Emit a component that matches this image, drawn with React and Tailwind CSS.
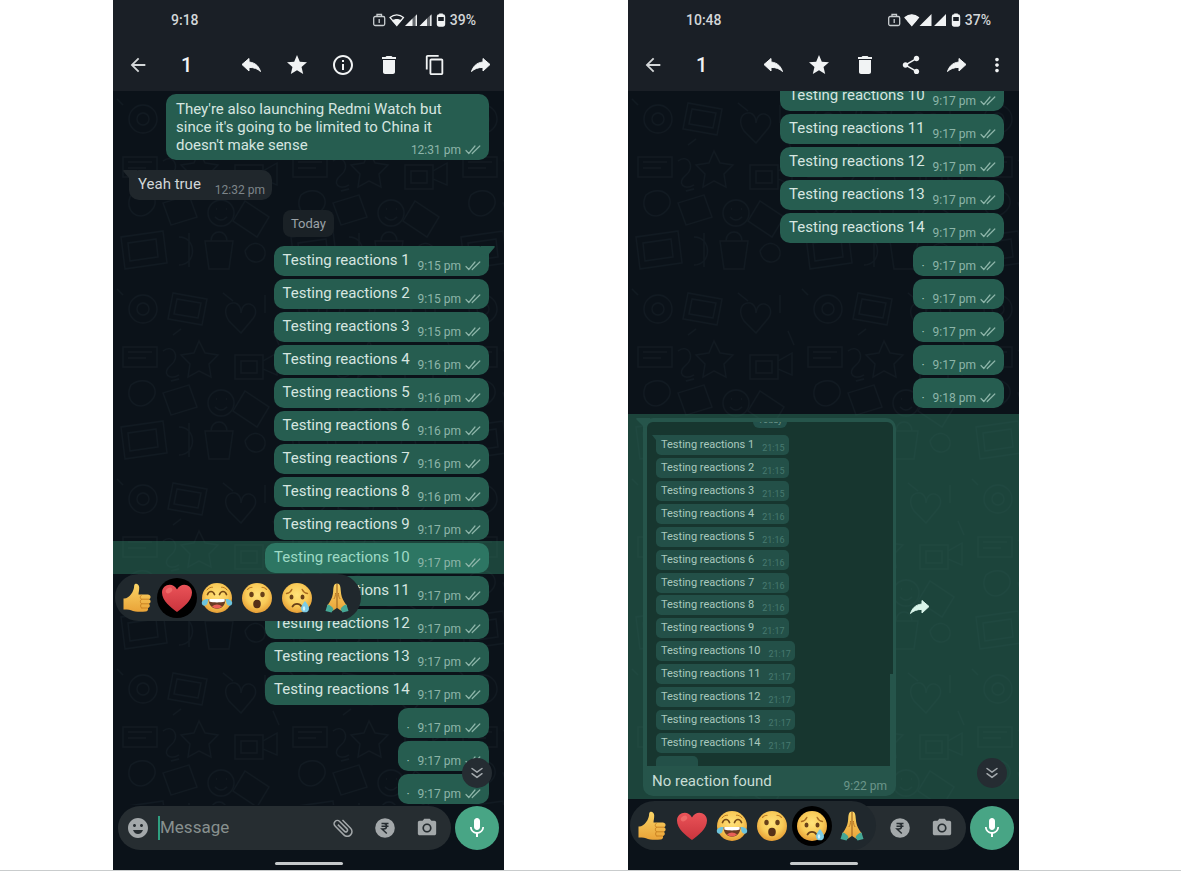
import React from "react";
import {
  MdArrowBack,
  MdStar,
  MdInfoOutline,
  MdDelete,
  MdContentCopy,
  MdShare,
  MdMoreVert,
  MdMic,
  MdCameraAlt,
  MdAttachFile,
  MdEmojiEmotions,
} from "react-icons/md";

/* ---------- icons ---------- */

function ArrowIcon({ back = false, className = "size-6" }) {
  return (
    <svg viewBox="0 0 24 24" className={className} fill="currentColor" stroke="currentColor" strokeWidth="1" strokeLinejoin="round" aria-hidden="true">
      {back ? (
        <path d="M10 9V5.5L3 11.500l7 6.500v-3.600c5 0 8.500 1.200 11.500 4.100-1.500-4.500-4.500-8.800-11.500-9.500z" />
      ) : (
        <path d="M14 9V5.5l7 6-7 6.500v-3.600c-5 0-8.500 1.200-11.500 4.100C4 14 7 9.700 14 9z" />
      )}
    </svg>
  );
}

function Ticks() {
  return (
    <svg viewBox="0 0 16 10" className="h-[10px] w-4" fill="none" stroke="currentColor" strokeWidth="1.2" strokeLinecap="round" strokeLinejoin="round" aria-hidden="true">
      <path d="M1 5.500l2.800 3L10 1M7.200 8.500L14.800 1" />
    </svg>
  );
}

function RupeeIcon() {
  return (
    <svg viewBox="0 0 24 24" className="size-6" aria-hidden="true">
      <circle cx="12" cy="12" r="9.800" fill="currentColor" />
      <path d="M8.500 7.500h7M8.500 10.300h7M8.500 7.500h2.300c3.600 0 3.600 5.500 0 5.500H9l4.800 4.500" fill="none" stroke="#262d31" strokeWidth="1.500" />
    </svg>
  );
}

function ChevronsIcon() {
  return (
    <svg viewBox="0 0 14 14" className="size-[14px]" fill="none" stroke="currentColor" strokeWidth="1.500" strokeLinecap="round" strokeLinejoin="round" aria-hidden="true">
      <path d="M2 2.500l5 3.700 5-3.700M2 7.700l5 3.700 5-3.700" />
    </svg>
  );
}

function StatusIcons({ dual }) {
  return (
    <svg viewBox="0 0 76 16" className="h-4 w-[76px]" aria-hidden="true">
      <g fill="none" stroke="#c9cdd0" strokeWidth="1.300">
        <rect x="1.700" y="4.500" width="11" height="9" rx="1.500" />
        <path d="M5 4.300V2.500h4.500v1.800M7.200 7v4" />
      </g>
      <path d="M18 5.500c4-3.600 9.500-3.600 13.500 0l-6.700 8z" fill={dual ? "none" : "#f0f2f3"} stroke="#f0f2f3" strokeWidth="1.200" />
      <path d="M19.800 8.500c3-2 7-2 10 0l-5 5z" fill="#f0f2f3" />
      {dual ? (
        <g fill="#f0f2f3">
          <path d="M33 14L45 2v12z" opacity=".35" />
          <path d="M33 14l7.500-7.500V14zM43.600 4l1.400-1.500V14h-1.400z" />
          <path d="M47.500 14l12-12v12z" opacity=".35" />
          <path d="M47.500 14l7.500-7.500V14zM58.100 4l1.400-1.500V14h-1.400z" />
        </g>
      ) : (
        <path d="M32.500 14l12-12v12zM47 14L59 2v12z" fill="#f0f2f3" />
      )}
      <path d="M67.200 3V1.500h3.600V3" fill="#f0f2f3" />
      <rect x="65.500" y="3" width="7" height="11" rx="1.400" fill="none" stroke="#f0f2f3" strokeWidth="1.400" />
      <path d="M66 9h6v5h-6zM66 3h6v2h-6z" fill="#f0f2f3" />
    </svg>
  );
}

/* ---------- emoji drawings ---------- */

function EmojiDefs() {
  return (
    <svg className="absolute size-0" aria-hidden="true">
      <defs>
        <radialGradient id="face" cx=".5" cy=".4" r=".6">
          <stop offset="0" stopColor="#ffe27a" />
          <stop offset=".6" stopColor="#f9cb58" />
          <stop offset="1" stopColor="#e59d35" />
        </radialGradient>
        <linearGradient id="skin" x1="0" y1="0" x2="0" y2="1">
          <stop offset="0" stopColor="#fbd566" />
          <stop offset="1" stopColor="#e9a338" />
        </linearGradient>
        <linearGradient id="heart" x1="0" y1="0" x2="0" y2="1">
          <stop offset="0" stopColor="#ea5358" />
          <stop offset="1" stopColor="#c9343d" />
        </linearGradient>
        <pattern id="doodle" width="170" height="190" patternUnits="userSpaceOnUse">
          <g fill="none" stroke="#1a242c" strokeWidth="1.300" opacity=".42">
            <circle cx="30" cy="28" r="14" />
            <circle cx="30" cy="28" r="6" />
            <path d="M60 12l34 6-5 26-34-6zM64 18l24 4-3 15-24-4z" />
            <path d="M116 40c-12-18 12-26 12-8 2-18 24-6 10 8l-10 12z" />
            <path d="M10 66h34v20H10zM15 71h24M15 77h18M50 70c10-8 18 6 8 14s-2 16 8 10" />
            <path d="M86 60l6 12 13 2-9 9 2 13-12-6-11 6 2-13-9-9 13-2z" />
            <path d="M122 74h28v24h-28zM128 80h16v12h-16zM150 80l14-8v22l-14-6" />
            <path d="M18 104c16-12 32 4 20 16s-28 0-20-16zM50 112l26-8 8 22-26 8z" />
            <circle cx="108" cy="122" r="13" />
            <path d="M103 118h1M113 118h1M102 126c4 4 8 4 12 0M132 110l24 16-12 20-24-16z" />
            <path d="M8 146l42-6 4 32-42 6zM15 152l28-4 2 18-28 4zM66 146c18 0 18 28 0 28M76 142v34M92 150h28l-4 28H96zM98 150c0-12 16-12 16 0M132 160c8-14 22-6 20 4s-18 10-20-4zM60 54l8-6M110 12l10 8M152 14v18M4 8l6 6M160 50l6 14M66 98l-8 2" />
          </g>
        </pattern>
      </defs>
    </svg>
  );
}

function ThumbEmoji() {
  return (
    <svg viewBox="0 0 32 32" className="size-8" aria-hidden="true">
      <path d="M2.500 16.500c3 .3 5.500-1.500 7.500-4.200 2.200-3 3-5.200 3.200-8.800.2-2.800 4.800-2.400 5 1.800.1 3.200-.7 5.400-.7 7.200h9.300c3.200 0 3.700 4 1.200 4.700 2.400.9 2 4.200-.3 4.600 1.800 1 1.400 3.900-.9 4.300.9 1.700-.2 3.400-2.300 3.500-6 .4-11 .3-14.500-1.400-2-1-4.700-.8-7.500-.6z" fill="url(#skin)" />
      <path d="M20.500 17.200h7.200M20.500 21.800h6.900M20.500 26h5.800M20.500 13c-1.800 1.300-1.600 3.600 0 4.200-1.500 1-1.500 3.700 0 4.600-1.300 1-1.200 3.400 0 4.200" fill="none" stroke="#c67e1f" strokeWidth=".9" strokeLinecap="round" />
    </svg>
  );
}

function HeartEmoji() {
  return (
    <svg viewBox="0 0 32 32" className="size-8" aria-hidden="true">
      <path d="M16 30C10 25.500 1 19 1 10.500 1 1.800 12.500-.2 16 7.500 19.500-.2 31 1.800 31 10.500 31 19 22 25.500 16 30z" fill="url(#heart)" />
      <ellipse cx="8" cy="8.500" rx="3.500" ry="2.500" fill="#f77b77" opacity=".6" transform="rotate(-35 8 8.500)" />
    </svg>
  );
}

function JoyEmoji() {
  return (
    <svg viewBox="0 0 32 32" className="size-8" aria-hidden="true">
      <circle cx="16" cy="16" r="15" fill="url(#face)" />
      <path d="M6.500 12.500c1.500-4 5.500-4 7 0M18.500 12.500c1.500-4 5.500-4 7 0" fill="none" stroke="#754a16" strokeWidth="1.700" strokeLinecap="round" />
      <path d="M6 8c1.500-2 3.500-3 5.500-2.800M26 8c-1.500-2-3.500-3-5.500-2.800" fill="none" stroke="#bb7a20" strokeWidth="1" strokeLinecap="round" />
      <path d="M7.500 17h17c0 6-3.500 9.700-8.500 9.700S7.500 23 7.500 17z" fill="#6a3b22" />
      <path d="M8.300 17h15.400v2.500c-4.500 1.200-11 1.200-15.400 0z" fill="#fff" />
      <path d="M11 24.500c2.500-2.700 7.500-2.700 10 0-2.500 2.500-7.500 2.500-10 0z" fill="#e85f57" />
      <path d="M7.500 17c-3.500-.3-6.500 1.500-6.700 3.800-.2 3.600 4.700 3.900 5.700.5.400-1.500.4-2.900 1-4.300zM24.500 17c3.500-.3 6.500 1.500 6.700 3.800.2 3.600-4.700 3.900-5.700.5-.4-1.500-.4-2.900-1-4.300z" fill="#6cc3dc" />
    </svg>
  );
}

function WowEmoji() {
  return (
    <svg viewBox="0 0 32 32" className="size-8" aria-hidden="true">
      <circle cx="16" cy="16" r="15" fill="url(#face)" />
      <ellipse cx="10.500" cy="12.500" rx="2.200" ry="2.800" fill="#684019" />
      <ellipse cx="21.500" cy="12.500" rx="2.200" ry="2.800" fill="#684019" />
      <path d="M6.500 7.500c1-1.500 2.500-2.300 4.500-2.300M25.500 7.500c-1-1.500-2.500-2.300-4.500-2.300" fill="none" stroke="#b77722" strokeWidth="1.100" strokeLinecap="round" />
      <ellipse cx="16" cy="22" rx="3.800" ry="4.200" fill="#553018" />
    </svg>
  );
}

function CryEmoji() {
  return (
    <svg viewBox="0 0 32 32" className="size-8" aria-hidden="true">
      <circle cx="16" cy="16" r="15" fill="url(#face)" />
      <ellipse cx="10.500" cy="15" rx="2" ry="2.600" fill="#684019" />
      <ellipse cx="21.500" cy="15" rx="2" ry="2.600" fill="#684019" />
      <path d="M5.500 11.500c2-.3 4.300-1.700 5.300-4M26.500 11.500c-2-.3-4.300-1.700-5.300-4" fill="none" stroke="#a96b20" strokeWidth="1.400" strokeLinecap="round" />
      <path d="M11.500 24.500c2-3.500 7-3.500 9 0" fill="none" stroke="#684019" strokeWidth="1.800" strokeLinecap="round" />
      <path d="M24 19c2.200 3 4 5 4 7.400 0 5.200-8 5.200-8 0 0-2.400 1.800-4.400 4-7.400z" fill="#7ccbe4" />
      <ellipse cx="23" cy="26.500" rx="1.200" ry="2.200" fill="#d3f2fb" />
    </svg>
  );
}

function PrayEmoji() {
  return (
    <svg viewBox="0 0 32 32" className="size-8" aria-hidden="true">
      <path d="M15.800 1.500c-2.800 0-3.400 3-3.600 7.500-.2 4-1.500 8-3.500 11L6 24l5.500 5 4.300-3z" fill="url(#skin)" />
      <path d="M16.200 1.500c2.800 0 3.400 3 3.600 7.500.2 4 1.500 8 3.500 11l2.700 4-5.500 5-4.300-3z" fill="url(#skin)" />
      <path d="M16 2v24M12.800 17c1.500-1.500 1.700-4 1.700-6M19.200 17c-1.500-1.500-1.700-4-1.700-6" fill="none" stroke="#bd7620" strokeWidth="1" />
      <path d="M6.500 22.500c2.700.5 5 2.300 6 4.800l-2 3.200L4.500 29zM25.500 22.500c-2.700.5-5 2.300-6 4.800l2 3.200 6-1.500z" fill="#45a795" />
    </svg>
  );
}

const REACTIONS = [
  ["Like", ThumbEmoji],
  ["Love", HeartEmoji],
  ["Laugh", JoyEmoji],
  ["Surprised", WowEmoji],
  ["Sad", CryEmoji],
  ["Thanks", PrayEmoji],
];

function ReactionBar({ selected, className }) {
  return (
    <div className={`absolute z-10 flex items-center rounded-full bg-[#20282d] ${className}`}>
      {REACTIONS.map(([name, Emoji]) => (
        <button
          key={name}
          type="button"
          aria-label={name}
          aria-pressed={name === selected}
          className={`flex size-10 items-center justify-center rounded-full ${name === selected ? "bg-black" : ""}`}
        >
          <Emoji />
        </button>
      ))}
    </div>
  );
}

/* ---------- phone parts ---------- */

function IconButton({ label, children, className = "w-[46px]" }) {
  return (
    <button type="button" aria-label={label} className={`flex h-10 shrink-0 items-center justify-center ${className}`}>
      {children}
    </button>
  );
}

function Header({ time, battery, dual, children }) {
  return (
    <header className="relative bg-[#1a1f26] text-[#f1f3f4]">
      <div className="flex h-10 items-center gap-[2px] pr-7 pl-[58px] text-[14px] font-medium text-[#d3d6d8]">
        <span className="flex-1">{time}</span>
        <StatusIcons dual={dual} />
        <span>{battery}</span>
      </div>
      <div className="flex h-[51px] items-center pb-[2px]">
        <IconButton label="Back" className="w-[50px] text-[#d4d7d9]">
          <MdArrowBack className="size-[22px]" />
        </IconButton>
        <span className="flex-1 pl-[18px] text-[20px] font-medium">1</span>
        {children}
      </div>
    </header>
  );
}

function Stamp({ time, ticks = true }) {
  return (
    <span className="flex items-center gap-1 text-[12px] leading-[14px] whitespace-nowrap text-[#8db5a9]">
      {time}
      {ticks && <Ticks />}
    </span>
  );
}

function Row({ text, time, selected = false, tail = false, className = "", children }) {
  return (
    <li className={`relative flex justify-end pt-[2px] pr-[15px] pb-px ${selected ? "z-10 bg-[#2d755e]/50" : ""} ${className}`}>
      <div
        className={`relative flex h-[30px] items-end gap-2 rounded-[10px] pr-2 pb-[3px] ${text ? "pl-[9px]" : "pl-2"} ${selected ? "bg-[#2d7663]" : "bg-[#265d50]"}`}
      >
        {tail && (
          <svg viewBox="0 0 14 10" className="absolute top-0 -right-[6px] h-[10px] w-[14px]" aria-hidden="true">
            <path d="M0 0h13c1 0 1 1 .5 1.500L8 8v2L0 8z" fill="#265d50" />
          </svg>
        )}
        {text ? (
          <span className={`self-start pt-[4px] text-[15px] leading-[20px] whitespace-nowrap ${selected ? "text-[#9fdac5]" : "text-[#d6e6e0]"}`}>{text}</span>
        ) : (
          <span className="text-[12px] leading-[14px] text-[#a9c8be]">·</span>
        )}
        <Stamp time={time} />
      </div>
      {children}
    </li>
  );
}

function Wallpaper() {
  return (
    <svg className="absolute inset-0 size-full" aria-hidden="true">
      <rect width="100%" height="100%" fill="url(#doodle)" />
    </svg>
  );
}

function ScrollDown() {
  return (
    <button type="button" aria-label="Scroll to latest" className="absolute right-3 bottom-[11px] z-10 flex size-[30px] items-center justify-center rounded-full bg-[#252c32] text-[#a3a9ad]">
      <ChevronsIcon />
    </button>
  );
}

function Footer({ className, input = false, children }) {
  return (
    <footer className="relative">
      <div className={`relative flex items-center gap-1 px-[5px] ${className}`}>
        <div className="flex h-[44px] min-w-0 flex-1 items-center rounded-full bg-[#262d31] pr-[3px] text-[#a3a8aa]">
          {input ? (
            <>
              <IconButton label="Emoji" className="w-10">
                <MdEmojiEmotions className="size-6" />
              </IconButton>
              <input
                aria-label="Message"
                placeholder="Message"
                className="h-6 min-w-0 flex-1 border-l-2 border-[#2f9f80] bg-transparent text-[17px] text-[#d6dadc] outline-none placeholder:text-[#88918f]"
              />
              <IconButton label="Attach" className="w-[42px]">
                <MdAttachFile className="size-6 -rotate-45" />
              </IconButton>
            </>
          ) : (
            <span className="flex-1" />
          )}
          <IconButton label="Payment" className="w-[42px]">
            <RupeeIcon />
          </IconButton>
          <IconButton label="Camera" className="w-[42px]">
            <MdCameraAlt className="size-[22px]" />
          </IconButton>
        </div>
        <button type="button" aria-label="Record voice message" className="flex size-[44px] shrink-0 items-center justify-center rounded-full bg-[#48a585] text-white">
          <MdMic className="size-6" />
        </button>
        {children}
      </div>
      <div className="flex h-5 items-center justify-center pt-[6px]">
        <span className="h-[3px] w-[68px] rounded-full bg-[#c5c9cb]" />
      </div>
    </footer>
  );
}

const LEFT_ROWS = [
  ["1", "9:15 pm"],
  ["2", "9:15 pm"],
  ["3", "9:15 pm"],
  ["4", "9:16 pm"],
  ["5", "9:16 pm"],
  ["6", "9:16 pm"],
  ["7", "9:16 pm"],
  ["8", "9:16 pm"],
  ["9", "9:17 pm"],
  ["10", "9:17 pm"],
  ["11", "9:17 pm"],
  ["12", "9:17 pm"],
  ["13", "9:17 pm"],
  ["14", "9:17 pm"],
];

const SHOT_ROWS = ["21:15", "21:15", "21:15", "21:16", "21:16", "21:16", "21:16", "21:16", "21:17", "21:17", "21:17", "21:17", "21:17", "21:17"];

function LeftPhone() {
  return (
    <section className="flex min-w-0 flex-1 flex-col bg-[#0b1219]">
      <Header time="9:18" battery="39%" dual>
        <IconButton label="Reply"><ArrowIcon back /></IconButton>
        <IconButton label="Star"><MdStar className="size-6" /></IconButton>
        <IconButton label="Info"><MdInfoOutline className="size-6" /></IconButton>
        <IconButton label="Delete"><MdDelete className="size-6" /></IconButton>
        <IconButton label="Copy"><MdContentCopy className="size-[22px]" /></IconButton>
        <IconButton label="Forward"><ArrowIcon /></IconButton>
      </Header>
      <main className="relative flex-1">
        <Wallpaper />
        <div className="relative flex flex-col pt-[3px]">
          <div className="mr-[15px] w-[323px] self-end rounded-[10px] bg-[#265d50] py-[6px] pr-2 pl-[10px] text-[15px] leading-[18px] text-[#d6e6e0]">
            <p className="max-w-[280px]">They're also launching Redmi Watch but since it's going to be limited to China it</p>
            <div className="flex h-[18px] justify-between">
              <span>doesn't make sense</span>
              <span className="pt-[7px]"><Stamp time="12:31 pm" /></span>
            </div>
          </div>
          <div className="relative mt-[10px] ml-4 flex h-[30px] items-end gap-[14px] self-start rounded-[10px] bg-[#20272c] pr-[7px] pb-[3px] pl-[9px]">
            <svg viewBox="0 0 14 10" className="absolute top-0 -left-[6px] h-[10px] w-[14px]" aria-hidden="true">
              <path d="M14 0H1C0 0 0 1 .5 1.500L6 8v2l8-2z" fill="#20272c" />
            </svg>
            <span className="self-start pt-[4px] text-[15px] leading-[20px] text-[#d2d6d8]">Yeah true</span>
            <span className="text-[12px] leading-[14px] text-[#7d8589]">12:32 pm</span>
          </div>
          <span className="mt-[10px] mb-[7px] flex h-[27px] items-center self-center rounded-lg bg-[#1a2126] px-2 text-[13px] text-[#9ba2a6]">Today</span>
          <ul>
            {LEFT_ROWS.map(([n, time]) => (
              <Row key={n} text={`Testing reactions ${n}`} time={time} tail={n === "1"} selected={n === "10"}>
                {n === "10" && <ReactionBar selected="Love" className="top-full left-[2px] h-[47px] pr-1 pl-[2px]" />}
              </Row>
            ))}
            <Row time="9:17 pm" />
            <Row time="9:17 pm" />
            <Row time="9:17 pm" />
          </ul>
        </div>
        <div className="absolute right-0 bottom-[6px]">
          <ScrollDown />
        </div>
      </main>
      <Footer input className="pt-px" />
    </section>
  );
}

function Screenshot() {
  return (
    <div className="relative h-[344px] overflow-hidden rounded-t-md bg-[#17362f] pl-[9px]">
      <span className="absolute -top-[9px] left-[106px] rounded-md bg-[#22504a] px-[5px] text-[9px] leading-[15px] text-[#6f988d]">Today</span>
      <ul className="flex h-[344px] flex-col justify-between pt-[13px]">
        {SHOT_ROWS.map((time, i) => (
          <li key={i} className="relative flex h-5 items-end gap-2 self-start rounded-[5px] bg-[#235048] pr-1 pl-[5px]">
            {i === 0 && (
              <svg viewBox="0 0 8 6" className="absolute top-0 -left-1 h-[6px] w-2" aria-hidden="true">
                <path d="M0 0h8v6L4 5z" fill="#235048" />
              </svg>
            )}
            <span className="self-center text-[11px] leading-[16px] text-[#a9c9be]">Testing reactions {i + 1}</span>
            <span className="text-[9px] leading-[13px] text-[#477a70]">{time}</span>
          </li>
        ))}
        <li className="h-[10px] w-[42px] rounded-t-[5px] bg-[#235048]" />
      </ul>
      <span className="absolute right-0 bottom-0 h-[92px] w-[3px] bg-[#26554b]" />
    </div>
  );
}

function RightPhone() {
  return (
    <section className="flex min-w-0 flex-1 flex-col bg-[#0b1219]">
      <Header time="10:48" battery="37%">
        <IconButton label="Reply"><ArrowIcon back /></IconButton>
        <IconButton label="Star"><MdStar className="size-6" /></IconButton>
        <IconButton label="Delete"><MdDelete className="size-6" /></IconButton>
        <IconButton label="Share"><MdShare className="size-[22px]" /></IconButton>
        <IconButton label="Forward"><ArrowIcon /></IconButton>
        <IconButton label="More" className="mr-[5px] w-[34px]"><MdMoreVert className="size-[22px]" /></IconButton>
      </Header>
      <main className="relative flex flex-1 flex-col justify-end overflow-hidden">
        <Wallpaper />
        <ul className="relative -mt-3 pb-[5px]">
          {["10", "11", "12", "13", "14"].map((n) => (
            <Row key={n} text={`Testing reactions ${n}`} time="9:17 pm" />
          ))}
          <Row time="9:17 pm" />
          <Row time="9:17 pm" />
          <Row time="9:17 pm" />
          <Row time="9:17 pm" />
          <Row time="9:18 pm" />
        </ul>
        <div className="relative flex items-center gap-3 bg-[#2d755e]/50 pt-1 pb-[3px] pl-[15px]">
          <figure className="relative w-[253px] rounded-[10px] bg-[#26554b] px-[3px] pt-1 pl-1">
            <svg viewBox="0 0 14 10" className="absolute top-0 -left-[7px] h-[10px] w-[14px]" aria-hidden="true">
              <path d="M14 0H1C0 0 0 1 .5 1.500L7 8v2l7-2z" fill="#26554b" />
            </svg>
            <Screenshot />
            <figcaption className="flex h-[30px] items-end justify-between pr-[6px] pb-[3px] pl-[5px]">
              <span className="self-start pt-[5px] text-[15px] leading-[20px] text-[#c8ddd5]">No reaction found</span>
              <span className="text-[12px] leading-[14px] text-[#6b958a]">9:22 pm</span>
            </figcaption>
          </figure>
          <button type="button" aria-label="Forward message" className="text-[#d9f5ea]">
            <ArrowIcon />
          </button>
        </div>
        <ScrollDown />
      </main>
      <Footer className="pt-[7px]">
        <ReactionBar selected="Sad" className="top-[2px] left-[2px] h-[49px] pr-1 pl-[2px]" />
      </Footer>
    </section>
  );
}

export default function App() {
  return (
    <div className="min-h-screen bg-white font-['Roboto',sans-serif]">
      <EmojiDefs />
      <div className="flex gap-[124px] border-b border-[#c9cccd] pr-[162px] pl-[113px]">
        <LeftPhone />
        <RightPhone />
      </div>
    </div>
  );
}
